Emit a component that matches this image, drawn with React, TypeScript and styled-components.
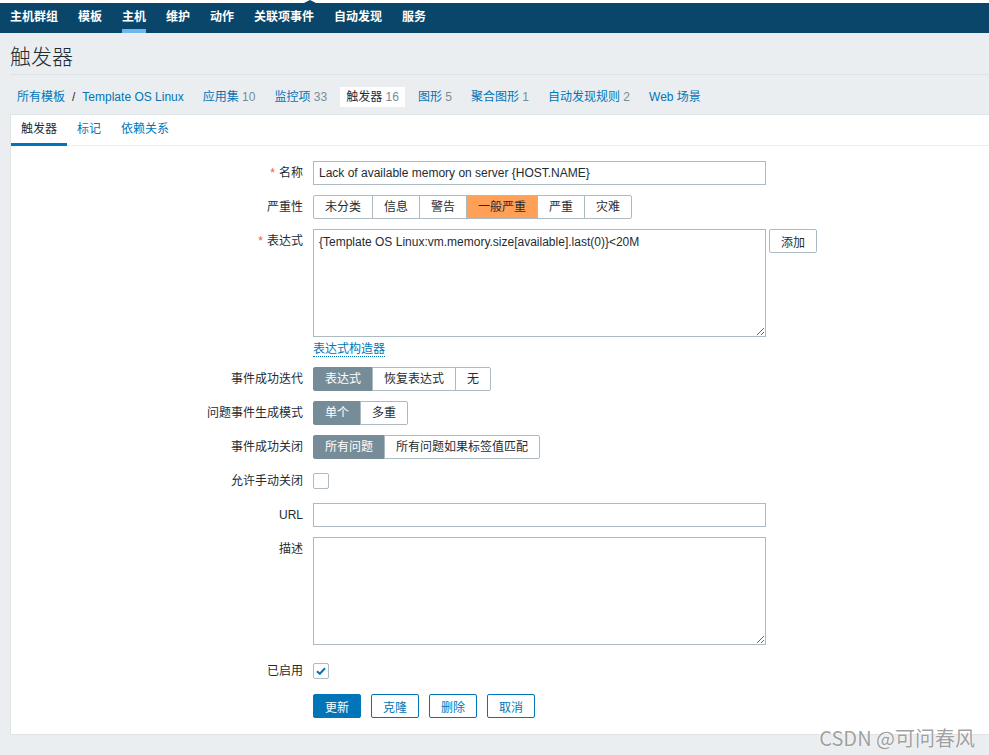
import React from 'react'
import styled, { createGlobalStyle } from 'styled-components'

const GlobalStyle = createGlobalStyle`
  html, body {
    margin: 0;
    padding: 0;
    background: #ebeef0;
    font-family: "Liberation Sans", Arial, "Noto Sans CJK SC", sans-serif;
    font-size: 12px;
    color: #1f2c33;
  }
  * { box-sizing: border-box; }
`

const topMenu = ['主机群组', '模板', '主机', '维护', '动作', '关联项事件', '自动发现', '服务']

const subNav = [
  { label: '应用集', count: '10' },
  { label: '监控项', count: '33' },
  { label: '触发器', count: '16', active: true },
  { label: '图形', count: '5' },
  { label: '聚合图形', count: '1' },
  { label: '自动发现规则', count: '2' },
  { label: 'Web 场景' }
]

const severities = ['未分类', '信息', '警告', '一般严重', '严重', '灾难']

const Page = styled.div`
  position: relative;
  min-height: 755px;
`

const TopStrip = styled.div`
  position: relative;
  height: 3px;
  background: #fff;
`

const Notch = styled.span`
  position: absolute;
  left: 304px;
  bottom: 0;
  width: 0;
  height: 0;
  border-left: 6px solid transparent;
  border-right: 6px solid transparent;
  border-bottom: 3px solid #0a466a;
`

const Nav = styled.nav`
  display: flex;
  height: 30px;
  background: #0a466a;
`

const NavItem = styled.span<{ $active?: boolean }>`
  position: relative;
  padding: 0 10px;
  line-height: 29px;
  color: #fff;
  font-weight: bold;
  font-size: 12px;

  &::after {
    content: '';
    display: ${p => (p.$active ? 'block' : 'none')};
    position: absolute;
    left: 10px;
    right: 10px;
    bottom: 0;
    height: 4px;
    background: #6cb8ec;
  }
`

const Header = styled.header`
  display: flex;
  align-items: center;
  height: 42px;
  margin: 0 0 0 10px;
  padding-top: 2px;
  border-bottom: 1px solid #dde2e5;
`

const Title = styled.h1`
  margin: 0;
  font-size: 21px;
  font-weight: 300;
  color: #1f2c33;
`

const SubNav = styled.div`
  display: flex;
  align-items: center;
  padding: 12px 10px 7px 11px;
`

const Crumbs = styled.span`
  padding: 0 6px;
  line-height: 20px;
`

const Link = styled.span`
  color: #0275b8;
`

const Sep = styled.span`
  margin: 0 7px;
  color: #1f2c33;
`

const SubItem = styled.span<{ $active?: boolean }>`
  margin-left: 7px;
  padding: 0 6px;
  line-height: 20px;
  background: ${p => (p.$active ? '#fff' : 'transparent')};
  color: ${p => (p.$active ? '#1f2c33' : '#0275b8')};
`

const Count = styled.span`
  color: #768d99;
`

const Panel = styled.section`
  margin-left: 10px;
  background: #fff;
  border: 1px solid #dfe4e7;
  border-right: none;
  padding-bottom: 16px;
`

const Tabs = styled.div`
  display: flex;
  height: 31px;
  border-bottom: 1px solid #ebeef0;
`

const Tab = styled.span<{ $active?: boolean }>`
  height: 31px;
  padding: 0 10px;
  line-height: 29px;
  color: ${p => (p.$active ? '#1f2c33' : '#0275b8')};
  border-bottom: 3px solid ${p => (p.$active ? '#0275b8' : 'transparent')};
  margin-bottom: -1px;
`

const Form = styled.div`
  display: flex;
  flex-direction: column;
  gap: 10px;
  padding-top: 15px;
`

const Row = styled.div<{ $shift?: number }>`
  display: grid;
  grid-template-columns: 292px 1fr;
  column-gap: 10px;
  margin-top: ${p => p.$shift ?? 0}px;
`

const Label = styled.label`
  text-align: right;
  line-height: 24px;
  color: #1f2c33;
`

const Req = styled.span`
  color: #e8643a;
  margin-right: 4px;
`

const Control = styled.div<{ $center?: boolean }>`
  display: flex;
  align-items: ${p => (p.$center ? 'center' : 'flex-start')};
  gap: 3px;
  min-height: 24px;
`

const Stack = styled.div`
  display: flex;
  flex-direction: column;
  align-items: flex-start;
`

const TextInput = styled.input`
  width: 453px;
  height: 24px;
  padding: 0 5px;
  border: 1px solid #acbbc2;
  border-radius: 0;
  font-family: inherit;
  font-size: 12px;
  color: #1f2c33;
  outline: none;
`

const TextArea = styled.textarea`
  display: block;
  width: 453px;
  height: 108px;
  padding: 5px 5px;
  border: 1px solid #acbbc2;
  border-radius: 0;
  font-family: inherit;
  font-size: 12px;
  line-height: 14px;
  color: #1f2c33;
  resize: both;
  outline: none;
`

const BuilderLink = styled.span`
  margin-top: 5px;
  line-height: 14px;
  color: #0275b8;
  border-bottom: 1px dotted #0275b8;
`

const Segmented = styled.div`
  display: inline-flex;
`

const Segment = styled.span<{ $active?: boolean; $tone?: string }>`
  height: 24px;
  padding: 0 11px;
  line-height: 22px;
  border: 1px solid ${p => (p.$active && !p.$tone ? '#768d99' : '#acbbc2')};
  margin-left: -1px;
  background: ${p => (p.$active ? p.$tone ?? '#768d99' : '#fff')};
  color: ${p => (p.$active && !p.$tone ? '#fff' : '#1f2c33')};
  white-space: nowrap;

  &:first-child {
    margin-left: 0;
    border-radius: 2px 0 0 2px;
  }
  &:last-child {
    border-radius: 0 2px 2px 0;
  }
`

const Button = styled.button<{ $primary?: boolean }>`
  height: 24px;
  padding: 0 11px;
  border: 1px solid #0275b8;
  border-radius: 2px;
  background: ${p => (p.$primary ? '#0275b8' : '#fff')};
  color: ${p => (p.$primary ? '#fff' : '#0275b8')};
  font-family: inherit;
  font-size: 12px;
  cursor: pointer;
`

const PlainButton = styled(Button)`
  border-color: #acbbc2;
  color: #1f2c33;
`

const ButtonRow = styled.div`
  display: flex;
  gap: 10px;
`

const Check = styled.span`
  display: inline-flex;
  align-items: center;
  justify-content: center;
  width: 16px;
  height: 16px;
  border: 1px solid #acbbc2;
  border-radius: 2px;
  background: #fff;
`

const Watermark = styled.div`
  position: absolute;
  right: 14px;
  bottom: 3px;
  font-family: "Noto Sans CJK SC", "Liberation Sans", sans-serif;
  font-size: 20px;
  color: rgba(120, 120, 120, 0.7);
  text-shadow: 0 0 2px #fff;
`

const Checkbox: React.FC<{ checked?: boolean }> = ({ checked }) => (
  <Check>
    {checked && (
      <svg width='10' height='8' viewBox='0 0 10 8'>
        <path d='M1 4.2 L3.8 6.8 L9 1.3' fill='none' stroke='#0275b8' strokeWidth='2' />
      </svg>
    )}
  </Check>
)

const Options: React.FC<{ items: string[]; active: number; tone?: string }> = ({
  items,
  active,
  tone
}) => (
  <Segmented>
    {items.map((item, i) => (
      <Segment key={item} $active={i === active} $tone={tone}>
        {item}
      </Segment>
    ))}
  </Segmented>
)

const App: React.FC = () => {
  return (
    <Page>
      <GlobalStyle />
      <TopStrip>
        <Notch />
      </TopStrip>
      <Nav>
        {topMenu.map(item => (
          <NavItem key={item} $active={item === '主机'}>
            {item}
          </NavItem>
        ))}
      </Nav>
      <Header>
        <Title>触发器</Title>
      </Header>
      <SubNav>
        <Crumbs>
          <Link>所有模板</Link>
          <Sep>/</Sep>
          <Link>Template OS Linux</Link>
        </Crumbs>
        {subNav.map(item => (
          <SubItem key={item.label} $active={item.active}>
            {item.label}
            {item.count && <Count> {item.count}</Count>}
          </SubItem>
        ))}
      </SubNav>
      <Panel>
        <Tabs>
          <Tab $active>触发器</Tab>
          <Tab>标记</Tab>
          <Tab>依赖关系</Tab>
        </Tabs>
        <Form>
          <Row>
            <Label>
              <Req>*</Req>名称
            </Label>
            <Control>
              <TextInput readOnly value='Lack of available memory on server {HOST.NAME}' />
            </Control>
          </Row>
          <Row>
            <Label>严重性</Label>
            <Control>
              <Options items={severities} active={3} tone='#ffa059' />
            </Control>
          </Row>
          <Row>
            <Label>
              <Req>*</Req>表达式
            </Label>
            <Control>
              <Stack>
                <TextArea
                  readOnly
                  value='{Template OS Linux:vm.memory.size[available].last(0)}<20M'
                />
                <BuilderLink>表达式构造器</BuilderLink>
              </Stack>
              <PlainButton>添加</PlainButton>
            </Control>
          </Row>
          <Row>
            <Label>事件成功迭代</Label>
            <Control>
              <Options items={['表达式', '恢复表达式', '无']} active={0} />
            </Control>
          </Row>
          <Row>
            <Label>问题事件生成模式</Label>
            <Control>
              <Options items={['单个', '多重']} active={0} />
            </Control>
          </Row>
          <Row>
            <Label>事件成功关闭</Label>
            <Control>
              <Options items={['所有问题', '所有问题如果标签值匹配']} active={0} />
            </Control>
          </Row>
          <Row>
            <Label>允许手动关闭</Label>
            <Control $center>
              <Checkbox />
            </Control>
          </Row>
          <Row>
            <Label>URL</Label>
            <Control>
              <TextInput readOnly value='' />
            </Control>
          </Row>
          <Row>
            <Label>描述</Label>
            <Control>
              <TextArea readOnly value='' />
            </Control>
          </Row>
          <Row $shift={4}>
            <Label>已启用</Label>
            <Control $center>
              <Checkbox checked />
            </Control>
          </Row>
          <Row $shift={1}>
            <span />
            <ButtonRow>
              <Button $primary>更新</Button>
              <Button>克隆</Button>
              <Button>删除</Button>
              <Button>取消</Button>
            </ButtonRow>
          </Row>
        </Form>
      </Panel>
      <Watermark>CSDN @可问春风</Watermark>
    </Page>
  )
}

export default App
